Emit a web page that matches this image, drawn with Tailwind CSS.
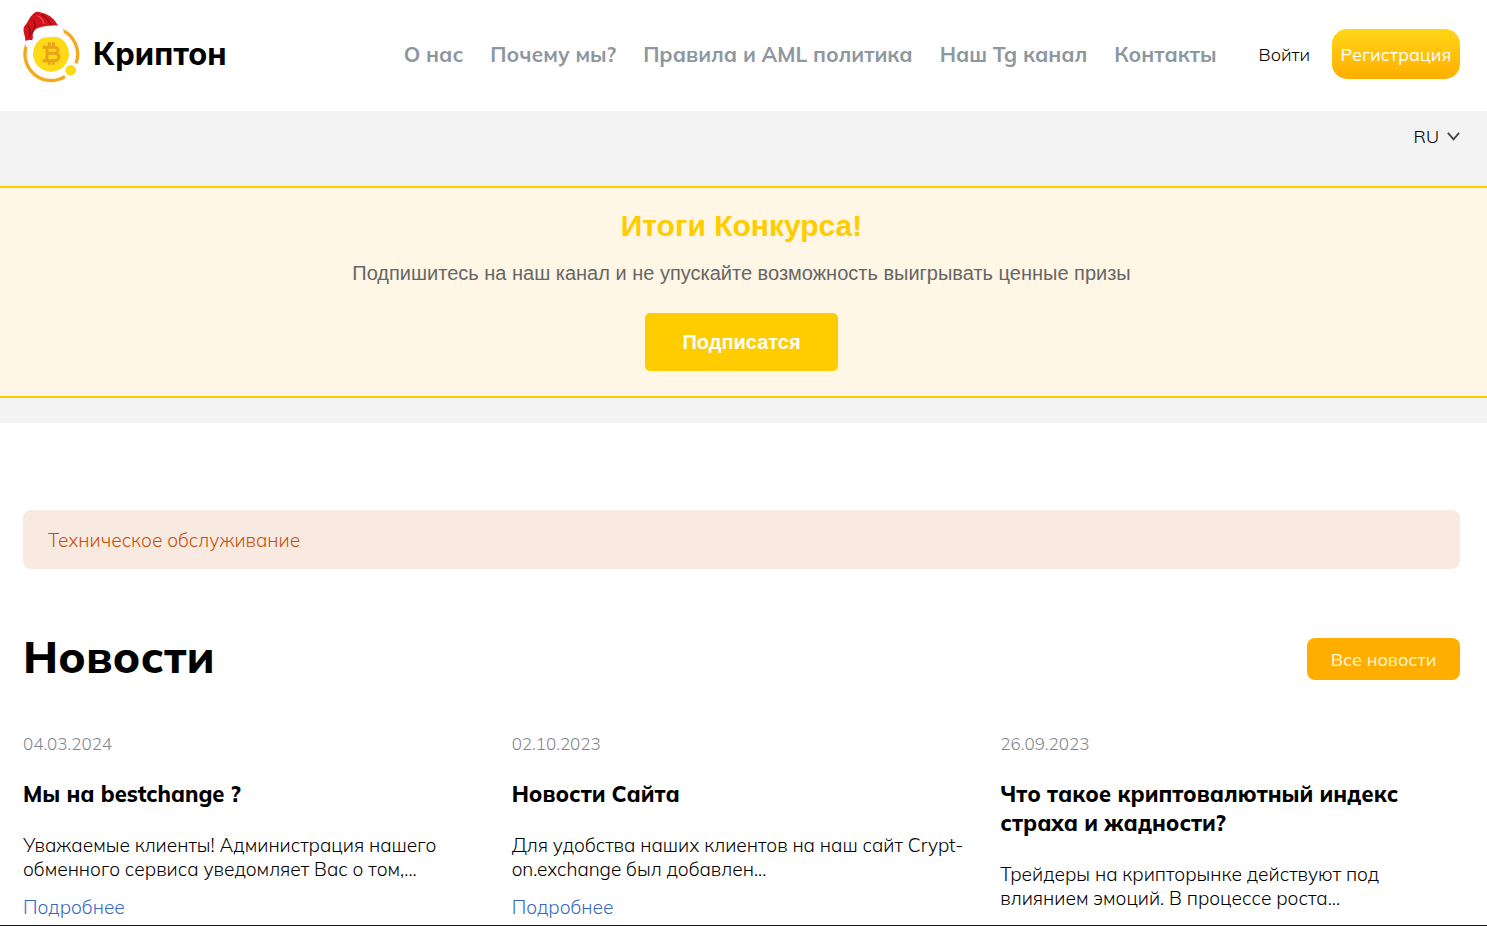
<!DOCTYPE html>
<html lang="ru">
<head>
    <meta charset="UTF-8">
    <meta name="viewport" content="width=device-width, initial-scale=1.0">
    <title>Криптон</title>
    <script src="https://cdn.jsdelivr.net/npm/@tailwindcss/browser@4"></script>
</head>
<body class="flex h-screen flex-col overflow-hidden bg-white font-['Mulish','Open_Sans','Noto_Sans',sans-serif] text-black">
    <header class="flex h-[111px] shrink-0 items-start pr-[27px] pl-[23px]">
        <a href="#" class="flex items-center gap-3 pt-[10px]">
            <svg class="h-[73px] w-[58px]" viewBox="39 30 174 219" fill="none">
                <!-- ring -->
                <path d="M51 132A79 79 0 0 0 165 230" stroke="#f5a81c" stroke-width="10"/>
                <path d="M155 90A79 79 0 0 1 198 190" stroke="#f5a81c" stroke-width="10"/>
                <!-- coin -->
                <circle cx="123" cy="161" r="54" fill="#fdd916"/>
                <circle cx="182" cy="211" r="16" fill="#fdd916"/>
                <path d="M98 142H130C149 142 149 160 132 160H111M132 160C152 160 152 182 132 182H98M111 142V182M118 127V142M130 127V142M118 182V194M130 182V194" stroke="#e8a317" stroke-width="9"/>
                <!-- hat -->
                <path d="M46 122C46 104 37 97 42 80C55 68 58 48 76 37C84 33 92 38 98 39C120 44 136 60 146 80L150 88L78 96L66 120Z" fill="#d3141d"/>
                <path d="M95 44C107 52 119 63 125 79M69 61C78 67 77 84 65 101M53 77C61 84 62 98 58 113" stroke="#9c0c14" stroke-width="5"/>
                <path d="M82 48C92 50 99 60 102 72" stroke="#ef4046" stroke-width="5"/>
                <path d="M78 88C94 79 128 76 150 78C162 84 164 104 155 112C130 109 100 110 74 120C66 112 68 96 78 88Z" fill="#fff" stroke="#f1eeee" stroke-width="2"/>
                <circle cx="58" cy="132" r="11" fill="#fff" stroke="#f1eeee" stroke-width="2"/>
            </svg>
            <span class="pt-[14px] font-['Inter','Open_Sans',sans-serif] text-[31px] leading-10 font-bold">Криптон</span>
        </a>
        <nav class="ml-auto flex gap-[27px] pt-[38px] text-[21px] leading-8 font-bold whitespace-nowrap text-[#8e979f]">
            <a href="#">О нас</a>
            <a href="#">Почему мы?</a>
            <a href="#">Правила и AML политика</a>
            <a href="#">Наш Tg канал</a>
            <a href="#">Контакты</a>
        </nav>
        <div class="ml-[42px] flex items-center gap-[22px] pt-[29px] text-[18px] leading-6 font-light">
            <a href="#" class="pt-px">Войти</a>
            <a href="#" class="flex h-[50px] w-32 items-center justify-center rounded-[15px] bg-linear-to-b from-[#ffd615] to-[#ffae00] pt-px font-normal text-white">Регистрация</a>
        </div>
    </header>

    <section class="shrink-0 bg-[#f3f3f3] pb-[25px]">
        <div class="flex h-[75px] items-start justify-end pt-[14px] pr-[27px]">
            <button type="button" class="flex items-center gap-2 text-[18px] leading-6 font-light">
                RU
                <svg class="h-[13px] w-[13px]" viewBox="0 0 14 14" fill="none" stroke="#444" stroke-width="2"><path d="M1 2L7 9L13 2"/></svg>
            </button>
        </div>
        <div class="flex flex-col items-center border-y-2 border-[#fc0] bg-[#fff6e5] pt-5 pr-1 pb-[25px] font-['Liberation_Sans',sans-serif]">
            <h2 class="text-[30px] leading-9 font-bold text-[#fc0]">Итоги Конкурса!</h2>
            <p class="mt-[17px] text-[20px] leading-6 text-[#666]">Подпишитесь на наш канал и не упускайте возможность выигрывать ценные призы</p>
            <a href="#" class="mt-7 flex h-[58px] w-[193px] items-center justify-center rounded-[5px] bg-[#fc0] text-[20px] font-bold text-white">Подписатся</a>
        </div>
    </section>

    <main class="min-h-0 flex-1 overflow-hidden pt-[87px] pr-[27px] pl-[23px]">
        <div class="rounded-lg bg-[#f9eae1] px-[25px] pt-[18px] pb-4 text-[19px] leading-[25px] font-light text-[#c4500f]">Техническое обслуживание</div>

        <div class="mt-[57px] flex items-start justify-between">
            <h1 class="text-[45px] leading-[60px] font-extrabold">Новости</h1>
            <a href="#" class="mt-3 flex h-[42px] w-[153px] items-center justify-center rounded-lg bg-[#ffae00] pt-px text-[18px] text-[#fff6d8]">Все новости</a>
        </div>

        <div class="mt-[46px] grid grid-cols-3 gap-[29px]">
            <article>
                <time class="block text-[17px] leading-6 font-light text-[#7f8890]">04.03.2024</time>
                <h3 class="mt-6 text-[22px] leading-[29px] font-extrabold">Мы на bestchange ?</h3>
                <p class="mt-6 text-[19px] leading-6 font-light">Уважаемые клиенты! Администрация нашего обменного сервиса уведомляет Вас о том,...</p>
                <a href="#" class="mt-[14px] block text-[19px] leading-6 font-light text-[#3567c4]">Подробнее</a>
            </article>
            <article>
                <time class="block text-[17px] leading-6 font-light text-[#7f8890]">02.10.2023</time>
                <h3 class="mt-6 text-[22px] leading-[29px] font-extrabold">Новости Сайта</h3>
                <p class="mt-6 text-[19px] leading-6 font-light">Для удобства наших клиентов на наш сайт Crypt-on.exchange был добавлен...</p>
                <a href="#" class="mt-[14px] block text-[19px] leading-6 font-light text-[#3567c4]">Подробнее</a>
            </article>
            <article>
                <time class="block text-[17px] leading-6 font-light text-[#7f8890]">26.09.2023</time>
                <h3 class="mt-6 text-[22px] leading-[29px] font-extrabold">Что такое криптовалютный индекс страха и жадности?</h3>
                <p class="mt-6 text-[19px] leading-6 font-light">Трейдеры на крипторынке действуют под влиянием эмоций. В процессе роста...</p>
            </article>
        </div>
    </main>

    <footer class="h-px shrink-0 bg-[#1b1b1b]"></footer>
</body>
</html>
